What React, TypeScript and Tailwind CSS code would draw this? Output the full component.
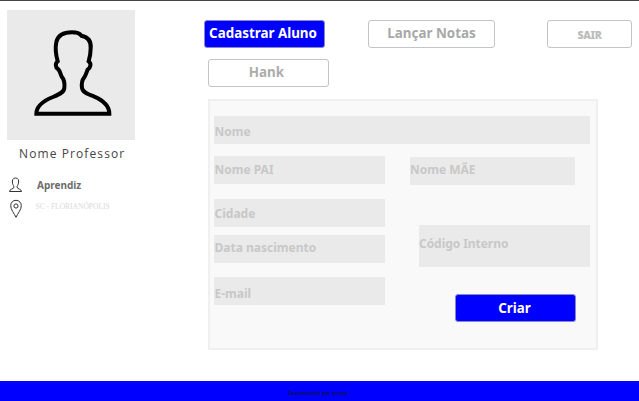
type FieldProps = { label: string; className: string };

function Field({ label, className }: FieldProps) {
  return (
    <div className={`flex items-start bg-[#eaeaea] text-[12px] leading-4 font-bold whitespace-nowrap text-[#c8c8c8] ${className}`}>
      {label}
    </div>
  );
}

function Avatar() {
  return (
    <svg width="128" height="130" viewBox="21 30 384 390" fill="none" stroke="#000" strokeWidth="12">
      <path d="M109 341C109 316 134 301 159 291C181 282 192 276 193 264C195 246 192 238 185 230C181 222 181 214 174 207C166 202 165 190 173 184C168 166 165 145 169 126C174 106 193 97 216 97C231 97 239 100 244 107C265 111 274 124 272 145C272 163 269 174 266 184C274 190 273 202 263 209C259 218 257 226 253 232C245 242 244 251 246 264C248 277 262 282 281 289C305 299 328 315 328 341Z" />
    </svg>
  );
}

function PersonIcon() {
  return (
    <svg width="16" height="16" viewBox="0 0 16 16" fill="none" stroke="#333" strokeWidth="1">
      <path d="M2.5 14.5H14.5C14.5 11.7 10 12.3 10 10C10 8.9 11.2 8.2 11.5 6.2C12 3 11.2 1 8.5 1S5 3 5.5 6.2C5.8 8.2 7 8.9 7 10C7 12.3 2.5 11.7 2.5 14.5Z" />
    </svg>
  );
}

function PinIcon() {
  return (
    <svg width="12" height="19" viewBox="0 0 12 19" fill="none" stroke="#333" strokeWidth="1">
      <path d="M6 18.3C4.2 14.3.7 10.7.7 6.7C.7 3.5 3 1.3 6 1.3S11.3 3.5 11.3 6.7C11.3 10.7 7.8 14.3 6 18.3Z" />
      <circle cx="6" cy="7" r="2.1" />
    </svg>
  );
}

export default function App() {
  return (
    <div className="flex h-[401px] w-[639px] flex-col overflow-hidden border-t border-[#444] bg-white font-['Noto_Sans','Open_Sans',sans-serif]">
      <div className="flex h-[380px] shrink-0">
        <aside className="w-[203px] shrink-0 pt-[9px] pl-[7px]">
          <div className="h-[130px] w-[128px] bg-[#eaeaea]">
            <Avatar />
          </div>
          <h1 className="mt-[5px] ml-[12px] font-['Open_Sans',sans-serif] text-[12px] leading-[18px] tracking-[1.1px] whitespace-nowrap text-[#444]">
            Nome Professor
          </h1>
          <div className="mt-[14px] flex h-4 items-center">
            <PersonIcon />
            <span className="ml-[14px] text-[10px] leading-4 font-bold text-[#6c6c6c]">Aprendiz</span>
          </div>
          <div className="mt-[6px] flex h-[19px] items-center pl-[2.5px]">
            <PinIcon />
            <span className="mb-[3px] ml-[14px] font-['Liberation_Serif',serif] text-[7.5px] leading-3 whitespace-nowrap text-[#d8d8d8]">
              SC - FLORIANÓPOLIS
            </span>
          </div>
        </aside>
        <main className="flex-1">
          <nav className="flex pt-[19px] pl-px text-[13.4px] font-bold text-[#a8a8a8]">
            <button className="h-7 w-[121px] rounded-[3px] border border-[#8888c8] bg-[#0000ff] pr-[3px] pb-[2px] whitespace-nowrap text-white">
              Cadastrar Aluno
            </button>
            <button className="ml-[43px] h-7 w-[127px] rounded-[3px] border border-[#c4c4c4] pb-[2px] whitespace-nowrap">
              Lançar Notas
            </button>
            <button className="ml-[52px] h-7 w-[85px] rounded-[3px] border border-[#c4c4c4] pt-[3px] text-[10.5px] font-black tracking-[-0.3px] text-[#bcbcbc]">
              SAIR
            </button>
          </nav>
          <button className="mt-[11px] ml-[5px] block h-7 w-[121px] rounded-[3px] border border-[#c4c4c4] pr-[4px] pb-px text-[13.4px] font-bold text-[#acacac]">
            Hank
          </button>
          <section className="mt-3 ml-[5px] h-[251px] w-[390px] border-2 border-[#f0f0f0] bg-[#f9f9f9] pt-[15px] pl-1">
            <Field label="Nome" className="h-7 w-[376px] pt-2 pl-[0.5px]" />
            <div className="flex">
              <div className="w-[171px]">
                <Field label="Nome PAI" className="mt-3 h-7 pt-[6px] pl-[0.5px]" />
                <Field label="Cidade" className="mt-[15px] h-7 pt-[7px] pl-[0.5px]" />
                <Field label="Data nascimento" className="mt-2 h-7 pt-[5px] pl-[0.5px]" />
                <Field label="E-mail" className="mt-[14px] h-7 pt-[9px] pl-[0.5px]" />
              </div>
              <div className="ml-[25px]">
                <Field label="Nome MÃE" className="mt-[13px] h-7 w-[165px] pt-[5px]" />
                <Field label="Código Interno" className="mt-10 ml-[9px] h-[42px] w-[171px] pt-[11px] tracking-[-0.05px]" />
                <button className="mt-[27px] ml-[45px] block h-7 w-[121px] rounded-[3px] border border-[#8888c8] bg-[#0000ff] pr-[2px] text-[13.4px] font-bold text-white">
                  Criar
                </button>
              </div>
            </div>
          </section>
        </main>
      </div>
      <footer className="flex h-5 shrink-0 items-center justify-center bg-[#0000ff] pt-[4px] pr-[3px] text-[5px] leading-none font-bold tracking-[-0.05px] whitespace-nowrap text-[#101050]">
        Desenvolvido por loucos
      </footer>
    </div>
  );
}
